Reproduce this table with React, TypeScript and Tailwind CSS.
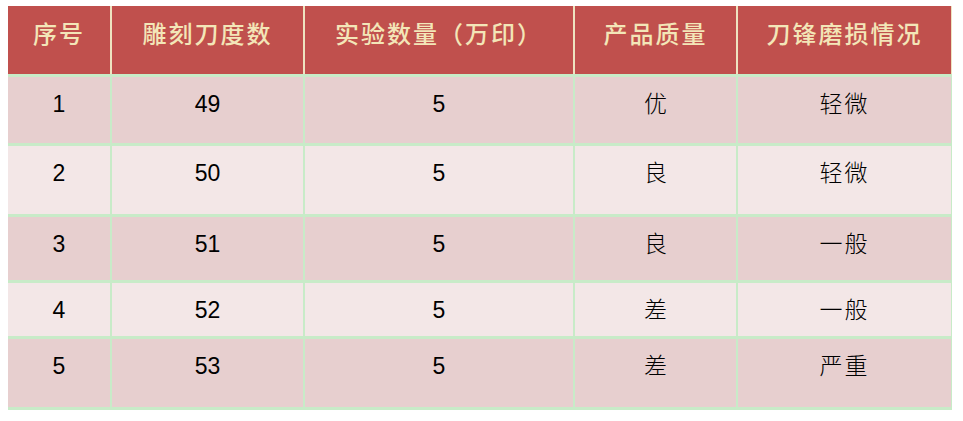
const header = ['序号', '雕刻刀度数', '实验数量（万印）', '产品质量', '刀锋磨损情况'];

const rows = [
  { no: '1', deg: '49', qty: '5', quality: '优', wear: '轻微', h: 'h-[66px]', bg: 'bg-[#e7cfcf]' },
  { no: '2', deg: '50', qty: '5', quality: '良', wear: '轻微', h: 'h-[68px]', bg: 'bg-[#f3e7e7]' },
  { no: '3', deg: '51', qty: '5', quality: '良', wear: '一般', h: 'h-[63px]', bg: 'bg-[#e7cfcf]' },
  { no: '4', deg: '52', qty: '5', quality: '差', wear: '一般', h: 'h-[53px]', bg: 'bg-[#f3e7e7]' },
  { no: '5', deg: '53', qty: '5', quality: '差', wear: '严重', h: 'h-[68px]', bg: 'bg-[#e7cfcf]' },
];

const cols = 'grid grid-cols-[102px_191px_268px_161px_213px] gap-x-[2px]';
const num = "font-['Liberation_Sans',sans-serif]";
const cjk = "font-['Noto_Sans_CJK_SC',sans-serif]";

export default function App() {
  return (
    <div className="min-h-[421px] w-[963px] bg-white pl-[8px] pt-[6px]">
      <div className="flex w-fit flex-col gap-y-[3px] bg-[#c8ebc8] pb-[3px]">
        {/* 表头 */}
        <div className={`${cols} h-[68px] bg-[#eee3c0] pr-[1px]`}>
          {header.map((t) => (
            <div
              key={t}
              className={`bg-[#c0504d] pt-[14px] text-center text-[24px] leading-[26px] font-medium tracking-[2px] text-[#f3e6b8] ${cjk}`}
            >
              {t}
            </div>
          ))}
        </div>

        {/* 数据行 */}
        {rows.map((r) => (
          <div key={r.no} className={`${cols} ${r.h} pr-[1px]`}>
            <div className={`${r.bg} pt-[12px] text-center text-[23px] leading-[30px] text-black ${num}`}>{r.no}</div>
            <div className={`${r.bg} pt-[12px] text-center text-[23px] leading-[30px] text-black ${num}`}>{r.deg}</div>
            <div className={`${r.bg} pt-[12px] text-center text-[23px] leading-[30px] text-black ${num}`}>{r.qty}</div>
            <div className={`${r.bg} pt-[10px] text-center text-[23px] leading-[30px] font-light text-black ${cjk}`}>{r.quality}</div>
            <div className={`${r.bg} pt-[10px] text-center text-[23px] leading-[30px] font-light tracking-[2px] text-black ${cjk}`}>{r.wear}</div>
          </div>
        ))}
      </div>
    </div>
  );
}
